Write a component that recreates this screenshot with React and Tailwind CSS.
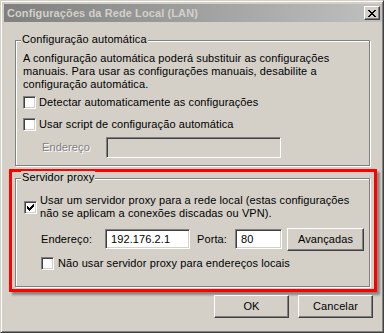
const sunken =
  'border border-t-[#808080] border-l-[#808080] border-r-white border-b-white shadow-[inset_1px_1px_0_#404040,inset_-1px_-1px_0_#d4d0c8]';
const raised =
  'border border-t-white border-l-white border-r-[#404040] border-b-[#404040] shadow-[inset_-1px_-1px_0_#808080,inset_1px_1px_0_#d4d0c8]';

// classic 7x7 tick, one 3px column per x
const CHECK_TOPS = [2, 3, 4, 3, 2, 1, 0];

function Checkbox({ checked }) {
  return (
    <span className={`relative block h-[13px] w-[13px] shrink-0 bg-white ${sunken}`}>
      {checked && (
        <svg className="absolute left-[2px] top-[2px]" width="7" height="7" viewBox="0 0 7 7" shapeRendering="crispEdges">
          <path d={CHECK_TOPS.map((t, i) => `M${i} ${t}h1v3h-1z`).join('')} fill="#000" />
        </svg>
      )}
    </span>
  );
}

function CloseGlyph() {
  return (
    <svg width="8" height="7" viewBox="0 0 8 7" shapeRendering="crispEdges">
      <path
        d="M0 0h2v1h-2zM6 0h2v1h-2zM1 1h2v1h-2zM5 1h2v1h-2zM2 2h4v1h-4zM3 3h2v1h-2zM2 4h4v1h-4zM1 5h2v1h-2zM5 5h2v1h-2zM0 6h2v1h-2zM6 6h2v1h-2z"
        fill="#000"
      />
    </svg>
  );
}

function GroupBox({ label, className, children }) {
  return (
    <div className={`relative border border-[#808080] shadow-[1px_1px_0_#fff,inset_1px_1px_0_#fff] ${className}`}>
      <span className="absolute left-[5px] top-[-8px] bg-[#d4d0c8] px-[1px] leading-[13px]">{label}</span>
      {children}
    </div>
  );
}

function Button({ children, className }) {
  return (
    <button className={`flex items-center justify-center bg-[#d4d0c8] leading-[13px] ${raised} ${className}`}>
      {children}
    </button>
  );
}

export default function App() {
  return (
    <div className="flex h-[333px] w-[384px] flex-col border border-t-[#d4d0c8] border-l-[#d4d0c8] border-r-[#404040] border-b-[#404040] bg-[#d4d0c8] p-[2px] font-['Liberation_Sans',Arial,sans-serif] text-[11px] leading-[13px] tracking-[0.1px] text-black shadow-[inset_1px_1px_0_#fff,inset_-1px_-1px_0_#808080]">
      <div className="ml-[1px] mt-[1px] flex h-[18px] w-[378px] items-center justify-between bg-gradient-to-r from-[#808080] to-[#c0c0c0] pl-[3px] pr-[2px]">
        <span className="font-bold text-[#d4d0c8]">Configurações da Rede Local (LAN)</span>
        <button className={`flex h-[14px] w-[16px] items-center justify-center bg-[#d4d0c8] ${raised}`}>
          <CloseGlyph />
        </button>
      </div>

      <GroupBox label="Configuração automática" className="ml-[12px] mt-[18px] h-[126px] w-[355px] pl-[7px] pt-[11px]">
        <p>
          A configuração automática poderá substituir as configurações
          <br />
          manuais. Para usar as configurações manuais, desabilite a
          <br />
          configuração automática.
        </p>
        <label className="mt-[5px] flex items-center">
          <Checkbox />
          <span className="ml-[3px]">Detectar automaticamente as configurações</span>
        </label>
        <label className="mt-[9px] flex items-center">
          <Checkbox />
          <span className="ml-[3px]">Usar script de configuração automática</span>
        </label>
        <div className="mt-[6px] flex items-center">
          <span className="ml-[19px] w-[64px] text-[#808080] [text-shadow:1px_1px_0_#fff]">Endereço</span>
          <div className={`h-[21px] w-[175px] bg-[#d4d0c8] ${sunken}`} />
        </div>
      </GroupBox>

      <div className="ml-[6px] mt-[3px] h-[123px] w-[368px] border-[3px] border-[#ff0000] pl-[3px] pt-[6px] shadow-[3px_3px_2px_rgba(0,0,0,0.35)]">
        <GroupBox label="Servidor proxy" className="h-[109px] w-[355px] pl-[8px] pt-[15px]">
          <label className="flex items-center">
            <Checkbox checked />
            <span className="ml-[3px]">
              Usar um servidor proxy para a rede local (estas configurações
              <br />
              não se aplicam a conexões discadas ou VPN).
            </span>
          </label>
          <div className="mt-[8px] flex items-start">
            <span className="ml-[17px] mt-[5px] w-[64px]">Endereço:</span>
            <div className={`mt-[1px] flex h-[20px] w-[85px] items-center bg-white pl-[5px] ${sunken}`}>192.176.2.1</div>
            <span className="ml-[7px] mt-[5px] w-[38px]">Porta:</span>
            <div className={`mt-[1px] flex h-[20px] w-[47px] items-center bg-white pl-[5px] ${sunken}`}>80</div>
            <Button className="ml-[5px] h-[23px] w-[77px]">Avançadas</Button>
          </div>
          <label className="mt-[6px] flex items-center pl-[17px]">
            <Checkbox />
            <span className="ml-[4px]">Não usar servidor proxy para endereços locais</span>
          </label>
        </GroupBox>
      </div>

      <div className="mr-[8px] mt-[3px] flex justify-end gap-[9px]">
        <Button className="h-[23px] w-[75px]">OK</Button>
        <Button className="h-[23px] w-[75px]">Cancelar</Button>
      </div>
    </div>
  );
}
